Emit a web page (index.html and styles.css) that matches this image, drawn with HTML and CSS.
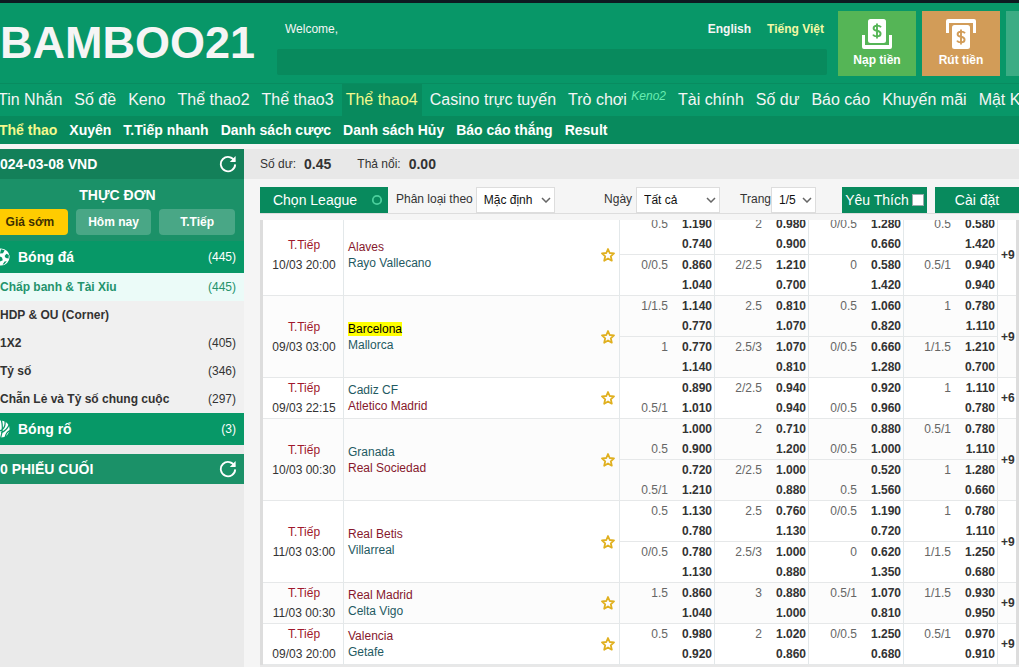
FILE: index.html
```html
<!DOCTYPE html>
<html lang="vi">
<head>
<meta charset="utf-8">
<meta name="viewport" content="width=device-width, initial-scale=1">
<title>BAMBOO21</title>
<link rel="stylesheet" href="styles.css">
</head>
<body>
<svg class="symbols" aria-hidden="true">
  <symbol id="star" viewBox="0 0 14 14"><path d="M7 1 8.7 5 13 5.4 9.8 8.3 10.8 12.7 7 10.4 3.2 12.7 4.2 8.3 1 5.4 5.3 5Z" fill="none" stroke="#e0b020" stroke-width="1.8" stroke-linejoin="round"/></symbol>
  <symbol id="reload" viewBox="0 0 18 18"><path d="M15.6 6.2A7.2 7.2 0 1 0 16.2 9.4" fill="none" stroke="#fff" stroke-width="1.8"/><path d="M16.6 1V7H10.8Z" fill="#fff"/></symbol>
  <symbol id="chevron" viewBox="0 0 10 6"><path d="M1 1 5 5 9 1" fill="none" stroke="#666" stroke-width="1.5"/></symbol>
</svg>

<header class="header">
  <h1 class="logo">BAMBOO21</h1>
  <div class="account">
    <div class="account-row">
      <span class="welcome">Welcome,</span>
      <a class="lang" href="#">English</a>
      <a class="lang lang-active" href="#">Tiếng Việt</a>
    </div>
    <div class="ticker"></div>
  </div>
  <div class="wallet">
    <button class="wallet-btn deposit" type="button">
      <svg width="30" height="30" viewBox="0 0 30 30" aria-hidden="true"><rect x="6" y="0" width="18" height="24" rx="2.5" fill="#fff"/><path d="M0 16H3V26H27V16H30V28Q30 30 28 30H2Q0 30 0 28Z" fill="#fff"/><path d="M19 8.2Q18 6.6 15 6.6Q11.6 6.6 11.6 9.2Q11.6 11.2 15 11.8Q18.6 12.5 18.6 14.8Q18.6 17.4 15 17.4Q12 17.4 11 15.6M15 4.6V19.4" fill="none" stroke="#55b556" stroke-width="1.9"/></svg>
      <span>Nạp tiền</span>
    </button>
    <button class="wallet-btn withdraw" type="button">
      <svg width="30" height="30" viewBox="0 0 30 30" aria-hidden="true"><path d="M0 14V2Q0 0 2 0H28Q30 0 30 2V14H27V4H3V14Z" fill="#fff"/><rect x="6" y="6" width="18" height="24" rx="2.5" fill="#fff"/><path d="M19 14.2Q18 12.6 15 12.6Q11.6 12.6 11.6 15.2Q11.6 17.2 15 17.8Q18.6 18.5 18.6 20.8Q18.6 23.4 15 23.4Q12 23.4 11 21.6M15 10.6V25.4" fill="none" stroke="#d29c58" stroke-width="1.9"/></svg>
      <span>Rút tiền</span>
    </button>
    <div class="wallet-btn wallet-more"></div>
  </div>
</header>

<nav class="nav">
  <a href="#">Tin Nhắn</a>
  <a href="#">Số đề</a>
  <a href="#">Keno</a>
  <a href="#">Thể thao2</a>
  <a href="#">Thể thao3</a>
  <a class="nav-active" href="#">Thể thao4</a>
  <a href="#">Casino trực tuyến</a>
  <a href="#">Trò chơi <i>Keno2</i></a>
  <a href="#">Tài chính</a>
  <a href="#">Số dư</a>
  <a href="#">Báo cáo</a>
  <a href="#">Khuyến mãi</a>
  <a href="#">Mật K</a>
</nav>
<nav class="subnav">
  <a class="subnav-active" href="#">Thể thao</a>
  <a href="#">Xuyên</a>
  <a href="#">T.Tiếp nhanh</a>
  <a href="#">Danh sách cược</a>
  <a href="#">Danh sách Hủy</a>
  <a href="#">Báo cáo thắng</a>
  <a href="#">Result</a>
</nav>

<div class="layout">
  <aside class="sidebar">
    <div class="side-head side-date">
      <span>024-03-08 VND</span>
      <button class="icon-btn" type="button" aria-label="Refresh"><svg width="18" height="18"><use href="#reload"/></svg></button>
    </div>
    <section class="menu">
      <h2 class="menu-title">THỰC ĐƠN</h2>
      <div class="tabs">
        <button class="tab tab-active" type="button">Giá sớm</button>
        <button class="tab" type="button">Hôm nay</button>
        <button class="tab" type="button">T.Tiếp</button>
      </div>
    </section>
    <a class="sport" href="#">
      <svg class="sport-icon" width="10" height="18" viewBox="8 0 10 18" aria-hidden="true"><circle cx="9" cy="9" r="8.6" fill="#fff"/><path d="M9 1.2 12.6 2.2 11 5.2 8 5.6ZM14.4 5.8 16.8 7 16.6 10.6 13.8 10 12.6 8ZM8 8.4 10 9.4 10.8 12.2 8 13.4ZM12.6 13.6 14.8 13.2 12 16.4 10.6 16.6Z" fill="#079867"/></svg>
      <span>Bóng đá</span><em>(445)</em>
    </a>
    <a class="bet bet-active" href="#"><span>Chấp banh &amp; Tài Xỉu</span><em>(445)</em></a>
    <a class="bet" href="#"><span>HDP &amp; OU (Corner)</span></a>
    <a class="bet" href="#"><span>1X2</span><em>(405)</em></a>
    <a class="bet" href="#"><span>Tỷ số</span><em>(346)</em></a>
    <a class="bet" href="#"><span>Chẵn Lẻ và Tỷ số chung cuộc</span><em>(297)</em></a>
    <a class="sport" href="#">
      <svg class="sport-icon" width="10" height="18" viewBox="8 0 10 18" aria-hidden="true"><circle cx="9" cy="9" r="8.6" fill="#fff"/><path d="M9.4 0Q11.6 9 8.6 18M13 1Q14 8 8 11M17 5Q15 10 9 13M18 10.6Q14 12 13 18" fill="none" stroke="#079867" stroke-width="1.2"/></svg>
      <span>Bóng rổ</span><em>(3)</em>
    </a>
    <div class="side-head side-slips">
      <span>0 PHIẾU CUỐI</span>
      <button class="icon-btn" type="button" aria-label="Refresh"><svg width="18" height="18"><use href="#reload"/></svg></button>
    </div>
  </aside>

  <main class="main">
    <div class="balance">
      <span>Số dư:</span><b>0.45</b>
      <span class="balance-next">Thả nổi:</span><b>0.00</b>
    </div>
    <div class="toolbar">
      <button class="btn btn-league" type="button">Chọn League <svg width="12" height="12" viewBox="0 0 12 12" aria-hidden="true"><circle cx="6" cy="6" r="4.2" fill="none" stroke="#4ccf9d" stroke-width="1.8"/></svg></button>
      <label class="sort-label" for="sort">Phân loại theo</label>
      <span class="select select-sort"><select id="sort"><option>Mặc định</option></select><svg class="arrow" width="10" height="6"><use href="#chevron"/></svg></span>
      <label class="day-label" for="day">Ngày</label>
      <span class="select select-day"><select id="day"><option>Tất cả</option></select><svg class="arrow" width="10" height="6"><use href="#chevron"/></svg></span>
      <label class="page-label" for="page">Trang</label>
      <span class="select select-page"><select id="page"><option>1/5</option></select><svg class="arrow" width="10" height="6"><use href="#chevron"/></svg></span>
      <label class="btn btn-fav" for="fav">Yêu Thích<input id="fav" type="checkbox"></label>
      <button class="btn btn-settings" type="button">Cài đặt</button>
    </div>

    <div class="board">
      <table class="odds">
        <colgroup><col class="c-time"><col><col class="c-wide"><col class="c-market"><col class="c-wide"><col class="c-market"><col class="c-more"></colgroup>
        <tbody>
          <tr>
            <td class="time" rowspan="2"><span>T.Tiếp</span>10/03 20:00</td>
            <td rowspan="2"><div class="match"><div><span class="fav">Alaves</span><span>Rayo Vallecano</span></div><svg width="14" height="14"><use href="#star"/></svg></div></td>
            <td><div class="market"><span>0.5</span><b>1.190</b><span></span><b>0.740</b></div></td>
            <td><div class="market"><span>2</span><b>0.980</b><span></span><b>0.900</b></div></td>
            <td><div class="market"><span>0/0.5</span><b>1.280</b><span></span><b>0.660</b></div></td>
            <td><div class="market"><span>0.5</span><b>0.580</b><span></span><b>1.420</b></div></td>
            <td class="more" rowspan="2">+9</td>
          </tr>
          <tr>
            <td><div class="market"><span>0/0.5</span><b>0.860</b><span></span><b>1.040</b></div></td>
            <td><div class="market"><span>2/2.5</span><b>1.210</b><span></span><b>0.700</b></div></td>
            <td><div class="market"><span>0</span><b>0.580</b><span></span><b>1.420</b></div></td>
            <td><div class="market"><span>0.5/1</span><b>0.940</b><span></span><b>0.940</b></div></td>
          </tr>
        </tbody>
        <tbody class="alt">
          <tr>
            <td class="time" rowspan="2"><span>T.Tiếp</span>09/03 03:00</td>
            <td rowspan="2"><div class="match"><div><span class="fav"><mark>Barcelona</mark></span><span>Mallorca</span></div><svg width="14" height="14"><use href="#star"/></svg></div></td>
            <td><div class="market"><span>1/1.5</span><b>1.140</b><span></span><b>0.770</b></div></td>
            <td><div class="market"><span>2.5</span><b>0.810</b><span></span><b>1.070</b></div></td>
            <td><div class="market"><span>0.5</span><b>1.060</b><span></span><b>0.820</b></div></td>
            <td><div class="market"><span>1</span><b>0.780</b><span></span><b>1.110</b></div></td>
            <td class="more" rowspan="2">+9</td>
          </tr>
          <tr>
            <td><div class="market"><span>1</span><b>0.770</b><span></span><b>1.140</b></div></td>
            <td><div class="market"><span>2.5/3</span><b>1.070</b><span></span><b>0.810</b></div></td>
            <td><div class="market"><span>0/0.5</span><b>0.660</b><span></span><b>1.280</b></div></td>
            <td><div class="market"><span>1/1.5</span><b>1.210</b><span></span><b>0.700</b></div></td>
          </tr>
        </tbody>
        <tbody>
          <tr>
            <td class="time"><span>T.Tiếp</span>09/03 22:15</td>
            <td><div class="match"><div><span>Cadiz CF</span><span class="fav">Atletico Madrid</span></div><svg width="14" height="14"><use href="#star"/></svg></div></td>
            <td><div class="market"><span></span><b>0.890</b><span>0.5/1</span><b>1.010</b></div></td>
            <td><div class="market"><span>2/2.5</span><b>0.940</b><span></span><b>0.940</b></div></td>
            <td><div class="market"><span></span><b>0.920</b><span>0/0.5</span><b>0.960</b></div></td>
            <td><div class="market"><span>1</span><b>1.110</b><span></span><b>0.780</b></div></td>
            <td class="more">+6</td>
          </tr>
        </tbody>
        <tbody class="alt">
          <tr>
            <td class="time" rowspan="2"><span>T.Tiếp</span>10/03 00:30</td>
            <td rowspan="2"><div class="match"><div><span>Granada</span><span class="fav">Real Sociedad</span></div><svg width="14" height="14"><use href="#star"/></svg></div></td>
            <td><div class="market"><span></span><b>1.000</b><span>0.5</span><b>0.900</b></div></td>
            <td><div class="market"><span>2</span><b>0.710</b><span></span><b>1.200</b></div></td>
            <td><div class="market"><span></span><b>0.880</b><span>0/0.5</span><b>1.000</b></div></td>
            <td><div class="market"><span>0.5/1</span><b>0.780</b><span></span><b>1.110</b></div></td>
            <td class="more" rowspan="2">+9</td>
          </tr>
          <tr>
            <td><div class="market"><span></span><b>0.720</b><span>0.5/1</span><b>1.210</b></div></td>
            <td><div class="market"><span>2/2.5</span><b>1.000</b><span></span><b>0.880</b></div></td>
            <td><div class="market"><span></span><b>0.520</b><span>0.5</span><b>1.560</b></div></td>
            <td><div class="market"><span>1</span><b>1.280</b><span></span><b>0.660</b></div></td>
          </tr>
        </tbody>
        <tbody>
          <tr>
            <td class="time" rowspan="2"><span>T.Tiếp</span>11/03 03:00</td>
            <td rowspan="2"><div class="match"><div><span class="fav">Real Betis</span><span>Villarreal</span></div><svg width="14" height="14"><use href="#star"/></svg></div></td>
            <td><div class="market"><span>0.5</span><b>1.130</b><span></span><b>0.780</b></div></td>
            <td><div class="market"><span>2.5</span><b>0.760</b><span></span><b>1.130</b></div></td>
            <td><div class="market"><span>0/0.5</span><b>1.190</b><span></span><b>0.720</b></div></td>
            <td><div class="market"><span>1</span><b>0.780</b><span></span><b>1.110</b></div></td>
            <td class="more" rowspan="2">+9</td>
          </tr>
          <tr>
            <td><div class="market"><span>0/0.5</span><b>0.780</b><span></span><b>1.130</b></div></td>
            <td><div class="market"><span>2.5/3</span><b>1.000</b><span></span><b>0.880</b></div></td>
            <td><div class="market"><span>0</span><b>0.620</b><span></span><b>1.350</b></div></td>
            <td><div class="market"><span>1/1.5</span><b>1.250</b><span></span><b>0.680</b></div></td>
          </tr>
        </tbody>
        <tbody class="alt">
          <tr>
            <td class="time"><span>T.Tiếp</span>11/03 00:30</td>
            <td><div class="match"><div><span class="fav">Real Madrid</span><span>Celta Vigo</span></div><svg width="14" height="14"><use href="#star"/></svg></div></td>
            <td><div class="market"><span>1.5</span><b>0.860</b><span></span><b>1.040</b></div></td>
            <td><div class="market"><span>3</span><b>0.880</b><span></span><b>1.000</b></div></td>
            <td><div class="market"><span>0.5/1</span><b>1.070</b><span></span><b>0.810</b></div></td>
            <td><div class="market"><span>1/1.5</span><b>0.930</b><span></span><b>0.950</b></div></td>
            <td class="more">+9</td>
          </tr>
        </tbody>
        <tbody>
          <tr>
            <td class="time"><span>T.Tiếp</span>09/03 20:00</td>
            <td><div class="match"><div><span class="fav">Valencia</span><span>Getafe</span></div><svg width="14" height="14"><use href="#star"/></svg></div></td>
            <td><div class="market"><span>0.5</span><b>0.980</b><span></span><b>0.920</b></div></td>
            <td><div class="market"><span>2</span><b>1.020</b><span></span><b>0.860</b></div></td>
            <td><div class="market"><span>0/0.5</span><b>1.250</b><span></span><b>0.680</b></div></td>
            <td><div class="market"><span>0.5/1</span><b>0.970</b><span></span><b>0.910</b></div></td>
            <td class="more">+9</td>
          </tr>
        </tbody>
      </table>
    </div>
  </main>
</div>
</body>
</html>
```
FILE: styles.css
```css
* { box-sizing: border-box; }

body {
  margin: 0;
  min-height: 100vh;
  display: flex;
  flex-direction: column;
  overflow: hidden;
  background: #f5f5f5;
  color: #333;
  font-family: "Liberation Sans", Arial, sans-serif;
  font-size: 12px;
  border-top: 3px solid #0d1a20;
}

a { color: inherit; text-decoration: none; }
em { font-style: normal; }
button, select { font-family: inherit; font-size: inherit; }
button { border: 0; padding: 0; cursor: pointer; }
.symbols { display: none; }

/* Header */
.header {
  display: flex;
  height: 80px;
  padding-top: 8px;
  overflow: hidden;
  background: #089768;
  color: #f5f5f5;
}
.logo {
  flex: none;
  width: 277px;
  margin: 0;
  font-size: 45px;
  line-height: 64px;
}
.account { flex: 1; min-width: 0; }
.account-row {
  display: flex;
  gap: 16px;
  height: 38px;
  padding: 0 3px 0 8px;
  line-height: 36px;
}
.welcome { margin-right: auto; }
.lang { font-weight: bold; }
.lang-active { color: #f3f9a5; }
.ticker { height: 26px; border-radius: 2px; background: #088a5d; }
.wallet { display: flex; gap: 6px; margin-left: 11px; }
.wallet-btn {
  flex: none;
  display: flex;
  flex-direction: column;
  align-items: center;
  gap: 4px;
  width: 78px;
  height: 65px;
  padding-top: 8px;
  color: #fff;
  font-size: 12px;
  font-weight: bold;
}
.deposit { background: #55b556; }
.withdraw { background: #d29c58; }
.wallet-more { margin-right: -65px; background: #3bac84; }

/* Navigation */
.nav {
  display: flex;
  gap: 4px;
  height: 33px;
  margin-left: -6px;
  border-top: 1px solid #088c60;
  background: #089768;
  color: #f5f5f5;
  font-size: 16px;
  line-height: 32px;
  white-space: nowrap;
}
.nav a { flex: none; padding: 0 4px; }
.nav i { color: #68edb1; font-size: 12px; vertical-align: 5px; line-height: 12px; }
.nav .nav-active { background: #088a5d; color: #f3f98c; }
.subnav {
  display: flex;
  gap: 12px;
  height: 28px;
  margin-left: -1px;
  background: #088a5d;
  color: #fff;
  font-size: 14px;
  font-weight: bold;
  line-height: 28px;
  white-space: nowrap;
}
.subnav-active { color: #f3f98c; }

.layout { flex: 1; display: flex; padding-top: 5px; }

/* Sidebar */
.sidebar { flex: none; width: 244px; background: #eaeaea; }
.side-head {
  display: flex;
  align-items: center;
  justify-content: space-between;
  height: 30px;
  padding-right: 7px;
  color: #fff;
  font-size: 14px;
  font-weight: bold;
}
.side-date { background: #138059; }
.side-slips { margin-top: 9px; background: #1b9168; }
.icon-btn { height: 18px; background: none; }
.menu {
  height: 62px;
  padding: 8px 9px 0 0;
  background: #1b9168;
  color: #fff;
}
.menu-title {
  margin: 0 0 6px;
  font-size: 14px;
  line-height: 16px;
  text-align: center;
}
.tabs { display: flex; gap: 8px; margin-left: -8px; }
.tab {
  flex: 1;
  height: 26px;
  border-radius: 4px;
  background: #49a786;
  color: #fff;
  font-weight: bold;
}
.tab-active { background: #fc0; color: #3d3000; }
.sport {
  display: flex;
  align-items: center;
  height: 32px;
  padding-right: 8px;
  background: #079867;
  color: #fff;
  font-size: 14px;
  font-weight: bold;
}
.sport-icon { margin-right: 8px; }
.sport em { margin-left: auto; font-size: 12px; font-weight: normal; }
.bet {
  display: flex;
  justify-content: space-between;
  padding-right: 8px;
  background: #f0f0f0;
  font-weight: bold;
  line-height: 28px;
}
.bet em { font-weight: normal; }
.bet-active { background: #ebfbf8; color: #24936c; }

/* Main column */
.main {
  flex: 1;
  min-width: 0;
  display: flex;
  flex-direction: column;
}
.balance {
  display: flex;
  gap: 8px;
  height: 30px;
  padding-left: 16px;
  background: #e8e8e8;
  line-height: 30px;
}
.balance b { font-size: 14px; }
.balance-next { margin-left: 18px; }

.toolbar {
  display: flex;
  height: 35px;
  margin: 0 0 6px 16px;
  padding-top: 8px;
  border-bottom: 1px solid #ddd;
  line-height: 24px;
  white-space: nowrap;
}
.btn {
  flex: none;
  display: flex;
  align-items: center;
  justify-content: center;
  height: 26px;
  background: #088a5d;
  color: #fff;
  font-size: 14px;
}
.btn-league { width: 128px; gap: 14px; padding-left: 8px; }
.btn-fav { width: 85px; gap: 3px; margin-left: 26px; }
.btn-settings { width: 84px; margin-left: 8px; }
.btn-fav input {
  appearance: none;
  width: 12px;
  height: 12px;
  margin: 0;
  border: 1px solid #9aa;
  background: #fff;
}
.sort-label { margin: 0 3px 0 8px; }
.day-label { margin: 0 4px 0 auto; }
.page-label { margin-left: 20px; }
.select { position: relative; height: 26px; }
.select-sort { width: 79px; }
.select-day { width: 84px; }
.select-page { width: 45px; }
.select select {
  appearance: none;
  width: 100%;
  height: 26px;
  padding: 0 7px;
  border: 1px solid #ddd;
  border-radius: 0;
  background: #fff;
  color: #111;
}
.arrow { position: absolute; right: 4px; top: 10px; pointer-events: none; }

/* Odds board, scrolled slightly past its first line */
.board {
  flex: 1;
  margin-left: 16px;
  overflow: hidden;
  background: #e8e8e8;
}
.odds {
  width: 100%;
  margin-top: -6px;
  table-layout: fixed;
  border-spacing: 0;
  border: solid #ddd;
  border-width: 0 3px;
  background: #fff;
}
.c-time { width: 81px; }
.c-wide { width: 95px; }
.c-market { width: 94px; }
.c-more { width: 18px; }
.odds td {
  padding: 0;
  border-right: 1px solid #e3e8ea;
  border-bottom: 1px solid #e6e8e9;
}
.odds .more { border-right: 0; padding-left: 3px; font-weight: bold; }
.alt { background: #fcfcfc; }
.odds .time { padding-left: 2px; text-align: center; line-height: 20px; }
.time span { display: block; color: #a0182c; }
.match {
  display: flex;
  align-items: center;
  justify-content: space-between;
  padding: 0 4px;
  color: #1f5a62;
  line-height: 16px;
}
.match span { display: block; }
.match .fav { color: #86182c; }
.match mark { background: #ff0; color: #000; }
.market {
  display: grid;
  grid-template-columns: 1fr 44px;
  grid-auto-rows: 20px;
  padding-right: 2px;
  line-height: 20px;
  text-align: right;
}
.market span { color: #666; }
```
